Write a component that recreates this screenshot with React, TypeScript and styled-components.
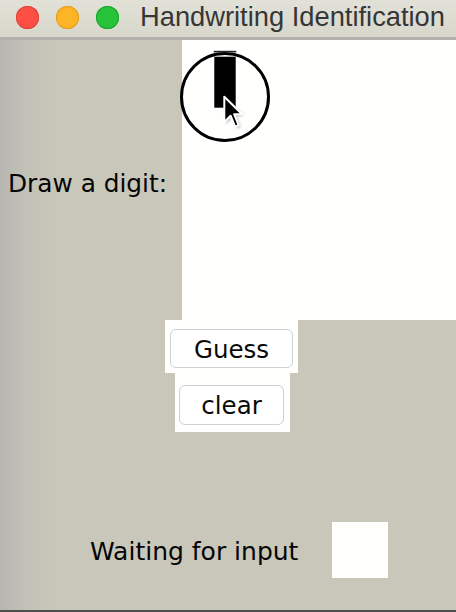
import React from "react";
import styled, { createGlobalStyle } from "styled-components";

const GlobalStyle = createGlobalStyle`
  html, body {
    margin: 0;
    padding: 0;
    background: #c8c7b9;
  }
  * { box-sizing: border-box; }
`;

const Window = styled.div`
  width: 456px;
  height: 612px;
  display: flex;
  flex-direction: column;
  overflow: hidden;
  background: linear-gradient(90deg, #b6b5af 0px, #c3c2b8 26px, #c8c7b9 60px, #c8c7b9 100%);
  border-bottom: 2px solid #4e4e4e;
`;

const TitleBar = styled.div`
  height: 40px;
  flex: none;
  display: flex;
  align-items: center;
  padding: 0 0 3px 16px;
  background: linear-gradient(#e2e1d7, #d8d7cc);
  border-bottom: 3px solid #b2b1ae;
`;

const Light = styled.span<{ $color: string; $ring: string }>`
  width: 23px;
  height: 23px;
  border-radius: 50%;
  background: ${(p) => p.$color};
  box-shadow: inset 0 0 0 1px ${(p) => p.$ring};
  margin-right: 17px;
  flex: none;
`;

const Title = styled.span`
  margin-left: 4px;
  font-family: "Liberation Sans", Arial, sans-serif;
  font-size: 27.3px;
  color: #363636;
  white-space: nowrap;
`;

const DrawRow = styled.div`
  display: flex;
  align-items: center;
  height: 280px;
  flex: none;
`;

const Label = styled.div`
  width: 182px;
  padding: 6px 0 0 8px;
  font-family: "DejaVu Sans", sans-serif;
  font-size: 24.8px;
  color: #050505;
  white-space: nowrap;
`;

const Canvas = styled.div`
  position: relative;
  width: 274px;
  height: 280px;
  background: #fffffd;
`;

const CursorOverlay = styled.svg`
  position: absolute;
  left: -4px;
  top: 8px;
  overflow: visible;
`;

const Controls = styled.div`
  display: flex;
  flex-direction: column;
  align-items: flex-start;
  margin-left: 165px;
`;

const Panel = styled.div<{ $w: number; $h: number; $pad: string; $offset: number }>`
  width: ${(p) => p.$w}px;
  height: ${(p) => p.$h}px;
  padding: ${(p) => p.$pad};
  margin-left: ${(p) => p.$offset}px;
  background: #fffffd;
`;

const Button = styled.button`
  width: 100%;
  height: 100%;
  margin: 0;
  padding: 3px 0 0 0;
  border: 1px solid #cfcfd6;
  border-radius: 6px;
  background: #ffffff;
  font-family: "DejaVu Sans", sans-serif;
  font-size: 24.5px;
  color: #0a0a0a;
  line-height: 1;
`;

const StatusRow = styled.div`
  display: flex;
  align-items: center;
  margin-top: 90px;
  padding-left: 90px;
`;

const StatusText = styled.span`
  width: 242px;
  font-family: "DejaVu Sans", sans-serif;
  font-size: 25px;
  color: #050505;
  white-space: nowrap;
  margin-top: 2px;
`;

const ResultBox = styled.div`
  width: 56px;
  height: 56px;
  background: #fffffd;
`;

export default function App() {
  return (
    <>
      <GlobalStyle />
      <Window>
        <TitleBar>
          <Light $color="#fd4f44" $ring="#e0443a" />
          <Light $color="#fdb426" $ring="#e29f1f" />
          <Light $color="#26c23a" $ring="#1fa530" />
          <Title>Handwriting Identification</Title>
        </TitleBar>
        <DrawRow>
          <Label>Draw a digit:</Label>
          <Canvas>
            <CursorOverlay width="100" height="100" viewBox="0 0 100 100">
              <defs>
                <filter id="sh" x="-50%" y="-50%" width="200%" height="200%">
                  <feGaussianBlur stdDeviation="1.6" />
                </filter>
              </defs>
              <circle cx="47" cy="49" r="43.5" fill="none" stroke="#000" strokeWidth="3" />
              <line x1="35.7" y1="3.6" x2="58.3" y2="3.6" stroke="#222" strokeWidth="1.6" />
              <rect x="36.3" y="8.7" width="21.4" height="51" fill="#000" />
              <g transform="translate(46.3 48.7)">
                <path
                  d="M1.5 2 L1.5 27 L8 20.5 L12.5 31.5 L16 30 L11.5 19 L19.5 19 Z"
                  fill="#777"
                  opacity="0.6"
                  filter="url(#sh)"
                />
                <path
                  d="M0 0 L0 25.5 L6.3 19 L10.8 30 L14.3 28.5 L9.8 17.5 L17.8 17.5 Z"
                  fill="#000"
                  stroke="#fff"
                  strokeWidth="2"
                  strokeLinejoin="round"
                />
              </g>
            </CursorOverlay>
          </Canvas>
        </DrawRow>
        <Controls>
          <Panel $w={133} $h={53} $pad="9px 5px 5px 5px" $offset={0}>
            <Button>Guess</Button>
          </Panel>
          <Panel $w={115} $h={59} $pad="12px 6px 7px 4px" $offset={10}>
            <Button>clear</Button>
          </Panel>
        </Controls>
        <StatusRow>
          <StatusText>Waiting for input</StatusText>
          <ResultBox />
        </StatusRow>
      </Window>
    </>
  );
}
